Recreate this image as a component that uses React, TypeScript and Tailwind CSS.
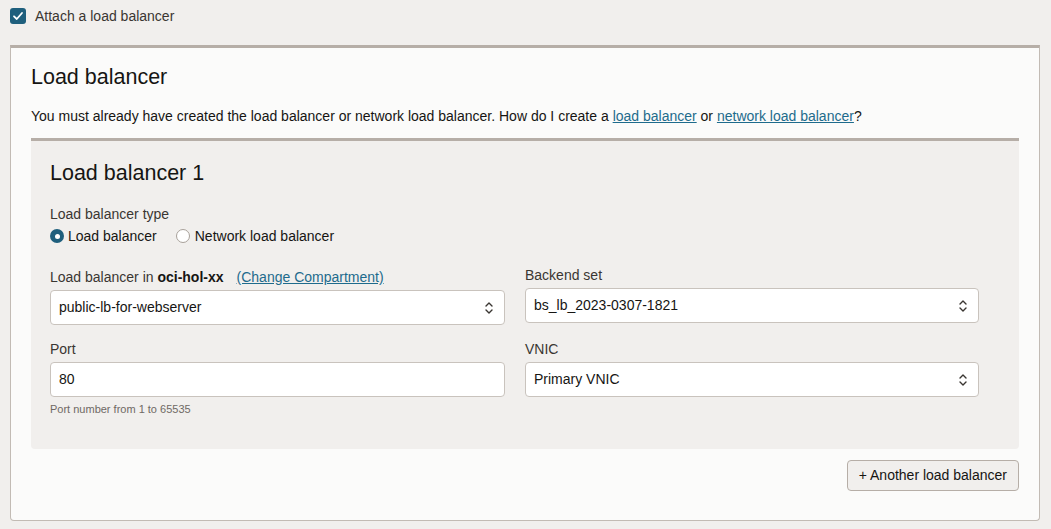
import React from 'react';

const font = { fontFamily: '"Liberation Sans", Arial, sans-serif' };

const Chevrons: React.FC = () => (
  <svg width="10" height="16" viewBox="0 0 10 16" fill="none" stroke="#3a3632" strokeWidth="1.4" strokeLinecap="round" strokeLinejoin="round">
    <path d="M2 6 L5 3 L8 6" />
    <path d="M2 10 L5 13 L8 10" />
  </svg>
);

const SelectBox: React.FC<{ value: string; className?: string }> = ({ value, className = '' }) => (
  <div className={`flex items-center justify-between bg-white border border-[#c9c3bd] rounded-[4px] pl-[8px] pr-[10px] text-[14px] text-[#161513] ${className}`}>
    <span>{value}</span>
    <Chevrons />
  </div>
);

export default function App() {
  return (
    <div style={font} className="bg-[#f1efed] h-[529px] w-[1051px] pt-[8px] px-[10px] text-[#161513] overflow-hidden">
      <label className="flex items-center gap-[9px] h-[16px]">
        <span className="w-[16px] h-[16px] rounded-[3px] bg-[#1f5f7d] flex items-center justify-center">
          <svg width="12" height="12" viewBox="0 0 12 12" fill="none" stroke="white" strokeWidth="1.8" strokeLinecap="round" strokeLinejoin="round">
            <path d="M2 6.3 L4.8 9 L10 3" />
          </svg>
        </span>
        <span className="text-[14px] text-[#3a3632]">Attach a load balancer</span>
      </label>

      <div className="mt-[21px] w-[1030px] h-[476px] bg-[#fbfbfa] border-t-[3px] border-t-[#b6aea7] border-x border-b border-[#c2bbb4] rounded-b-[4px] pt-[17px] px-[20px]">
        <h2 className="text-[21.5px] leading-[24px] text-[#161513]">Load balancer</h2>
        <p className="mt-[17px] text-[14px] leading-[20px]">
          You must already have created the load balancer or network load balancer. How do I create a{' '}
          <a className="text-[#1e6b8c] underline">load balancer</a> or{' '}
          <a className="text-[#1e6b8c] underline">network load balancer</a>?
        </p>

        <div className="mt-[12px] w-[988px] h-[311px] bg-[#f1efed] border-t-[3px] border-t-[#b6aea7] rounded-b-[4px] pt-[20px] px-[19px]">
          <h3 className="text-[21.5px] leading-[24px]">Load balancer 1</h3>

          <div className="mt-[21px] text-[14px] leading-[16px] text-[#3a3632]">Load balancer type</div>
          <div className="mt-[6px] flex items-center gap-[19px] text-[14px] leading-[16px]">
            <label className="flex items-center gap-[4px]">
              <span className="w-[14px] h-[14px] rounded-full bg-[#1f5f7d] flex items-center justify-center">
                <span className="w-[5px] h-[5px] rounded-full bg-white" />
              </span>
              Load balancer
            </label>
            <label className="flex items-center gap-[5px]">
              <span className="w-[14px] h-[14px] rounded-full bg-white border border-[#a8a19a]" />
              Network load balancer
            </label>
          </div>

          <div className="mt-[25px] grid grid-cols-[455px_454px] gap-x-[20px]">
            <div>
              <div className="text-[14px] leading-[16px] text-[#3a3632] flex items-baseline">
                <span>
                  Load balancer in <b className="text-[#161513]">oci-hol-xx</b>
                </span>
                <a className="ml-[13px] text-[#1e6b8c] underline">(Change Compartment)</a>
              </div>
              <SelectBox value="public-lb-for-webserver" className="mt-[5px] h-[35px]" />
            </div>
            <div>
              <div className="-mt-[2px] text-[14px] leading-[16px] text-[#3a3632]">Backend set</div>
              <SelectBox value="bs_lb_2023-0307-1821" className="mt-[5px] h-[35px]" />
            </div>

            <div className="mt-[16px]">
              <div className="text-[14px] leading-[16px] text-[#3a3632]">Port</div>
              <div className="mt-[5px] h-[35px] bg-white border border-[#c9c3bd] rounded-[4px] px-[8px] flex items-center text-[14px]">
                80
              </div>
              <div className="mt-[6px] text-[11px] leading-[12px] text-[#6f6964]">Port number from 1 to 65535</div>
            </div>
            <div className="mt-[16px]">
              <div className="text-[14px] leading-[16px] text-[#3a3632]">VNIC</div>
              <SelectBox value="Primary VNIC" className="mt-[5px] h-[35px]" />
            </div>
          </div>
        </div>

        <div className="mt-[11px] flex justify-end w-[988px]">
          <button className="h-[31px] px-[11px] bg-[#f1efed] border border-[#b6aea7] rounded-[4px] text-[14px] text-[#161513]">
            + Another load balancer
          </button>
        </div>
      </div>
    </div>
  );
}
